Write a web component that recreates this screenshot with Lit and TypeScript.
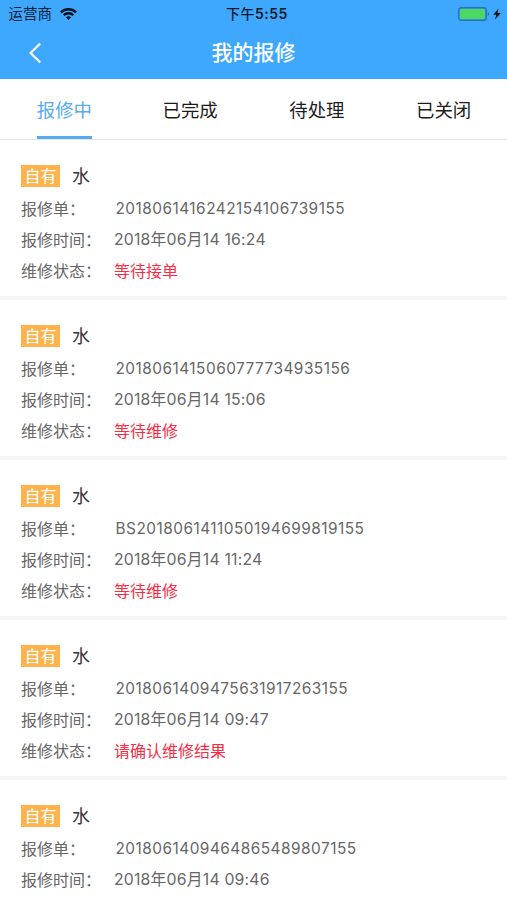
import { LitElement, html, css, nothing } from "lit";
import { customElement, property, state } from "lit/decorators.js";
import { classMap } from "lit/directives/class-map.js";

interface Repair {
  tag: string;
  kind: string;
  order: string;
  time: string;
  status?: string;
}

const TABS = ["报修中", "已完成", "待处理", "已关闭"];

const REPAIRS: Repair[] = [
  { tag: "自有", kind: "水", order: "2018061416242154106739155", time: "2018年06月14 16:24", status: "等待接单" },
  { tag: "自有", kind: "水", order: "2018061415060777734935156", time: "2018年06月14 15:06", status: "等待维修" },
  { tag: "自有", kind: "水", order: "BS2018061411050194699819155", time: "2018年06月14 11:24", status: "等待维修" },
  { tag: "自有", kind: "水", order: "2018061409475631917263155", time: "2018年06月14 09:47", status: "请确认维修结果" },
  { tag: "自有", kind: "水", order: "2018061409464865489807155", time: "2018年06月14 09:46" },
];

@customElement("status-bar")
class StatusBar extends LitElement {
  static styles = css`
    :host {
      display: grid;
      grid-template-columns: 1fr auto 1fr;
      align-items: center;
      height: 28px;
      padding: 0 6px 0 9px;
      font-size: 14.5px;
      line-height: 20px;
      color: #0b2238;
    }
    .carrier { display: flex; align-items: center; gap: 8px; margin-left: -0.5px; }
    .time { font-weight: 600; font-size: 14px; letter-spacing: 0.5px; margin-left: 4px; color: #08192a; }
    .cjk { font-weight: 500; }
    .power { display: flex; align-items: center; justify-content: flex-end; gap: 3px; }
    svg { display: block; }
  `;
  render() {
    return html`
      <div class="carrier">
        <span>运营商</span>
        <svg width="17" height="12" viewBox="0 0 17 12" fill="none" stroke="#06121e" stroke-width="2.3">
          <path d="M.9 4.3C5.2.2 11.8.2 16.1 4.3" />
          <path d="M3.7 7.2C6.4 4.6 10.6 4.6 13.3 7.2" />
          <path d="M8.5 12 5.9 9.3C7.4 8 9.6 8 11.1 9.3Z" fill="#06121e" stroke="none" />
        </svg>
      </div>
      <div class="time"><span class="cjk">下午</span>5:55</div>
      <div class="power">
        <svg width="32" height="14" viewBox="0 0 32 14">
          <rect x=".7" y=".7" width="27.6" height="12.6" rx="2.4" fill="#3a93df" stroke="#2872b6" stroke-width="1.2" />
          <rect x="2" y="2" width="25" height="10" rx="1.2" fill="#4bd964" />
          <path d="M29.8 5v4c1.5-.6 1.5-3.4 0-4Z" fill="#2468a5" />
        </svg>
        <svg width="8" height="12" viewBox="0 0 8 12"><path d="M5.6.5.2 6.8h3.2L2 11.5 7.8 5H4.5Z" fill="#06121e" /></svg>
      </div>
    `;
  }
}

@customElement("repair-card")
class RepairCard extends LitElement {
  @property({ attribute: false }) item!: Repair;
  static styles = css`
    :host {
      display: block;
      box-sizing: border-box;
      flex: none;
      height: 160px;
      padding: 20px 20px 0 21px;
      border-bottom: 4.5px solid #f5f5f5;
      color: #666;
      font-size: 16px;
    }
    .head { display: flex; align-items: center; height: 33px; gap: 13px; }
    .tag {
      width: 39px;
      height: 22px;
      line-height: 23px;
      margin: 0 0 2px;
      text-align: center;
      background: #ffb34b;
      color: #fff;
      font-size: 16px;
    }
    .kind { font-size: 18px; line-height: 24px; margin-left: -1px; color: #333; }
    .row { display: flex; align-items: center; height: 31.4px; line-height: 24px; white-space: nowrap; }
    .label { width: 93px; flex: none; }
    .order { padding-left: 1.5px; font-size: 15.4px; letter-spacing: 0.48px; }
    .time { font-size: 15.8px; letter-spacing: 0.2px; }
    .status { color: #fb2b45; }
  `;
  private row(label: string, cls: string, value: string) {
    return html`<div class="row"><span class="label">${label}：</span><span class=${cls}>${value}</span></div>`;
  }
  render() {
    const r = this.item;
    return html`
      <div class="head"><span class="tag">${r.tag}</span><span class="kind">${r.kind}</span></div>
      ${this.row("报修单", "order", r.order)} ${this.row("报修时间", "time", r.time)}
      ${r.status ? this.row("维修状态", "status", r.status) : nothing}
    `;
  }
}

@customElement("app-root")
class AppRoot extends LitElement {
  @state() private active = 0;
  static styles = css`
    :host {
      display: flex;
      flex-direction: column;
      height: 100vh;
      overflow: hidden;
      background: #fff;
      font-family: Inter, "Noto Sans CJK SC", sans-serif;
    }
    .header { flex: none; height: 79px; background: #3ea8ff; }
    .nav {
      display: grid;
      grid-template-columns: 60px 1fr 60px;
      align-items: center;
      height: 49px;
      color: #fff;
    }
    .back { display: block; margin-left: 28px; }
    .title { text-align: center; font-size: 21px; line-height: 30px; font-weight: 500; }
    .tabs {
      flex: none;
      display: grid;
      grid-template-columns: repeat(4, 1fr);
      box-sizing: border-box;
      height: 61px;
      border-bottom: 1px solid #e4e4e4;
    }
    .tab { display: flex; justify-content: center; font-size: 18.4px; line-height: 62px; color: #1c1c1c; }
    .tab span { box-sizing: border-box; height: 60px; border-bottom: 3px solid transparent; }
    .active { color: #55aaf0; padding-left: 2px; }
    .active span { border-color: #55aaf0; }
    .list { display: flex; flex-direction: column; flex: 1; min-height: 0; overflow: hidden; }
  `;
  render() {
    return html`
      <div class="header">
        <status-bar></status-bar>
        <div class="nav">
          <svg class="back" width="14" height="22" viewBox="0 0 14 22" fill="none" stroke="#fff" stroke-width="2.2">
            <path d="M12.2 1.5 2.6 11l9.6 9.5" />
          </svg>
          <div class="title">我的报修</div>
        </div>
      </div>
      <div class="tabs">
        ${TABS.map(
          (t, i) => html`<div class=${classMap({ tab: true, active: i === this.active })} @click=${() => (this.active = i)}>
            <span>${t}</span>
          </div>`
        )}
      </div>
      <div class="list">${REPAIRS.map((r) => html`<repair-card .item=${r}></repair-card>`)}</div>
    `;
  }
}
